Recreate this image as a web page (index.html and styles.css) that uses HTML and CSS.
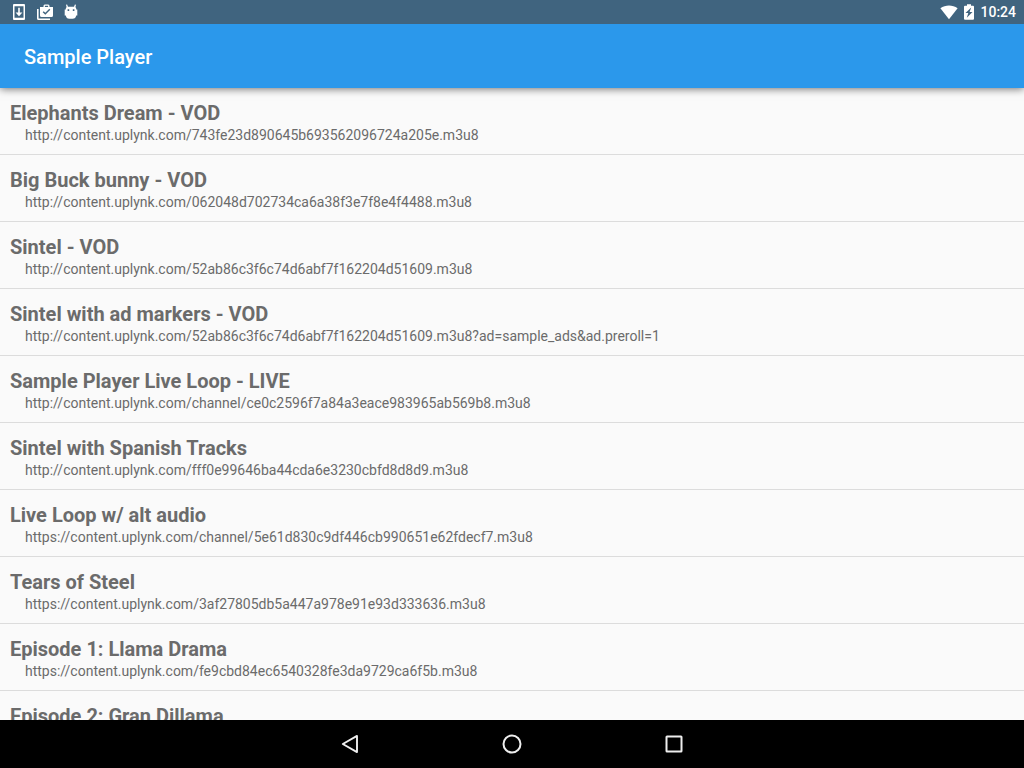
FILE: index.html
```html
<!DOCTYPE html>
<html lang="en">
<head>
<meta charset="utf-8">
<meta name="viewport" content="width=device-width, initial-scale=1">
<title>Sample Player</title>
<link rel="stylesheet" href="styles.css">
</head>
<body>
<div class="screen">
  <div class="status-bar">
    <div class="status-group notifications">
      <svg class="status-icon" width="18" height="18" viewBox="0 0 18 18" aria-hidden="true">
        <path fill="currentColor" fill-rule="evenodd" d="M4 1h10a1 1 0 0 1 1 1v14a1 1 0 0 1-1 1H4a1 1 0 0 1-1-1V2a1 1 0 0 1 1-1zM4.500 3.200v11.600h9V3.200z"/>
        <path fill="currentColor" d="M8.200 4.800h1.600v4.800h2.600L9 13.200 5.600 9.600h2.600z"/>
      </svg>
      <svg class="status-icon" width="18" height="18" viewBox="0 0 18 18" aria-hidden="true">
        <path fill="currentColor" d="M1 6h1.600v9.400H14V17H2.500A1.500 1.500 0 0 1 1 15.500z"/>
        <path fill="currentColor" fill-rule="evenodd" d="M7.500 4V2.500L8.600 1.400h3.800l1.100 1.100V4H17v8.500a1.500 1.500 0 0 1-1.500 1.500h-10A1.500 1.500 0 0 1 4 12.500V4zM8.900 2.800V4h3.200V2.800zM6.700 9.200l2.600 2.600 5-5-1-1-4 4L7.700 8.200z"/>
      </svg>
      <svg class="status-icon" width="18" height="18" viewBox="0 0 18 18" aria-hidden="true">
        <path fill="currentColor" fill-rule="evenodd" d="M4.600 4.300L4 1.800l1.100-.3.900 2.300h6l.9-2.300 1.100.3-.6 2.500c.5.300.8.800.8 1.400v.8h1.100v6h-1.100c-.2 2-1.600 3.300-3.600 3.300H7.400c-2 0-3.400-1.300-3.600-3.300H2.700v-6h1.100v-.8c0-.6.300-1.100.8-1.400zM5.600 6.300v1.600h1.600V6.300zM10.800 6.300v1.600h1.600V6.300z"/>
      </svg>
    </div>
    <div class="status-group system">
      <svg class="status-icon" width="18" height="18" viewBox="0 0 18 18" aria-hidden="true">
        <path fill="currentColor" d="M9 16.200.400 5.300C5.400 1.500 12.600 1.500 17.600 5.300z"/>
      </svg>
      <svg class="status-icon" width="10" height="18" viewBox="0 0 10 18" aria-hidden="true">
        <path fill="currentColor" fill-rule="evenodd" d="M3 1.200h4v1.600h2a1 1 0 0 1 1 1v12a1 1 0 0 1-1 1H1a1 1 0 0 1-1-1v-12a1 1 0 0 1 1-1h2zM7.200 4.600L1.500 10h2.800l-1.500 4.800L8.500 9H5.600z"/>
      </svg>
      <time class="clock">10:24</time>
    </div>
  </div>
  <header class="app-bar"><h1 class="app-title">Sample Player</h1></header>
  <main class="content">
    <ul class="videos">
      <li class="video"><h2 class="video-title">Elephants Dream - VOD</h2><p class="video-url">http://content.uplynk.com/743fe23d890645b693562096724a205e.m3u8</p></li>
      <li class="video"><h2 class="video-title">Big Buck bunny - VOD</h2><p class="video-url">http://content.uplynk.com/062048d702734ca6a38f3e7f8e4f4488.m3u8</p></li>
      <li class="video"><h2 class="video-title">Sintel - VOD</h2><p class="video-url">http://content.uplynk.com/52ab86c3f6c74d6abf7f162204d51609.m3u8</p></li>
      <li class="video"><h2 class="video-title">Sintel with ad markers - VOD</h2><p class="video-url">http://content.uplynk.com/52ab86c3f6c74d6abf7f162204d51609.m3u8?ad=sample_ads&amp;ad.preroll=1</p></li>
      <li class="video"><h2 class="video-title">Sample Player Live Loop - LIVE</h2><p class="video-url">http://content.uplynk.com/channel/ce0c2596f7a84a3eace983965ab569b8.m3u8</p></li>
      <li class="video"><h2 class="video-title">Sintel with Spanish Tracks</h2><p class="video-url">http://content.uplynk.com/fff0e99646ba44cda6e3230cbfd8d8d9.m3u8</p></li>
      <li class="video"><h2 class="video-title">Live Loop w/ alt audio</h2><p class="video-url">https://content.uplynk.com/channel/5e61d830c9df446cb990651e62fdecf7.m3u8</p></li>
      <li class="video"><h2 class="video-title">Tears of Steel</h2><p class="video-url">https://content.uplynk.com/3af27805db5a447a978e91e93d333636.m3u8</p></li>
      <li class="video"><h2 class="video-title">Episode 1: Llama Drama</h2><p class="video-url">https://content.uplynk.com/fe9cbd84ec6540328fe3da9729ca6f5b.m3u8</p></li>
      <li class="video"><h2 class="video-title">Episode 2: Gran Dillama</h2></li>
    </ul>
  </main>
  <nav class="nav-bar" aria-label="System navigation">
    <button class="nav-button" type="button" aria-label="Back">
      <svg width="24" height="24" viewBox="0 0 24 24" fill="none" stroke="currentColor" stroke-width="1.900" stroke-linejoin="round"><path d="M19 3.900v16.200L4.800 12z"/></svg>
    </button>
    <button class="nav-button" type="button" aria-label="Home">
      <svg width="24" height="24" viewBox="0 0 24 24" fill="none" stroke="currentColor" stroke-width="2"><circle cx="12" cy="12" r="8.500"/></svg>
    </button>
    <button class="nav-button" type="button" aria-label="Recent apps">
      <svg width="24" height="24" viewBox="0 0 24 24" fill="none" stroke="currentColor" stroke-width="2" stroke-linejoin="round"><rect x="4.500" y="4.500" width="15" height="15" rx=".5"/></svg>
    </button>
  </nav>
</div>
</body>
</html>
```
FILE: styles.css
```css
* {
  box-sizing: border-box;
}

body,
h1,
h2,
p,
ul {
  margin: 0;
  padding: 0;
}

body {
  font-family: Roboto, "Liberation Sans", sans-serif;
  color: #6b6b6b;
  background: #fafafa;
}

.screen {
  display: flex;
  flex-direction: column;
  height: 100vh;
}

.status-bar {
  display: flex;
  flex: none;
  align-items: center;
  justify-content: space-between;
  height: 24px;
  padding: 0 8px 0 10px;
  color: #fff;
  background: #40647f;
}

.status-group {
  display: flex;
  align-items: center;
}

.notifications {
  gap: 8px;
}

.system {
  gap: 6px;
}

.clock {
  font-size: 14px;
  font-weight: 500;
  line-height: 24px;
}

.app-bar {
  display: flex;
  flex: none;
  align-items: center;
  height: 64px;
  padding: 2px 24px 0;
  color: #fff;
  background: #2b98eb;
  box-shadow: 0 1px 8px rgba(0, 0, 0, 0.55);
  z-index: 1;
}

.status-bar {
  z-index: 2;
}

.app-title {
  font-size: 20px;
  font-weight: 500;
  line-height: 24px;
}

.content {
  flex: 1;
  min-height: 0;
  overflow: hidden;
}

.videos {
  list-style: none;
}

.video {
  padding: 13px 10px 9px;
  border-bottom: 1px solid #dcdcdc;
}

.video-title {
  font-size: 20px;
  font-weight: 700;
  line-height: 24px;
}

.video-url {
  padding-left: 15px;
  font-size: 14px;
  line-height: 20px;
}

.nav-bar {
  display: flex;
  flex: none;
  justify-content: center;
  height: 48px;
  background: #000;
}

.nav-button {
  display: flex;
  align-items: center;
  justify-content: center;
  width: 162px;
  padding: 0;
  border: 0;
  color: #eee;
  background: none;
}
```
